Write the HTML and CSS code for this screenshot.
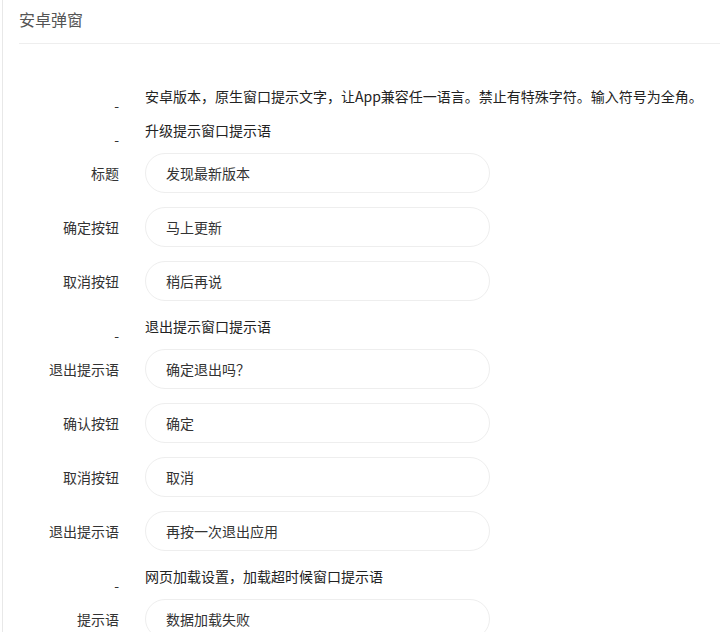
FILE: index.html
```html
<!DOCTYPE html>
<html lang="zh-CN">
<head>
    <meta charset="UTF-8">
    <meta name="viewport" content="width=device-width, initial-scale=1.0">
    <title>安卓弹窗</title>
    <link rel="stylesheet" href="styles.css">
</head>
<body>
    <div class="panel">
        <div class="panel-head">安卓弹窗</div>

        <form class="form">
            <div class="form-row is-text">
                <label class="form-label">-</label>
                <div class="form-text">安卓版本，原生窗口提示文字，让App兼容任一语言。禁止有特殊字符。输入符号为全角。</div>
            </div>

            <!-- 升级提示 -->
            <div class="form-row is-text">
                <label class="form-label">-</label>
                <div class="form-text">升级提示窗口提示语</div>
            </div>
            <div class="form-row">
                <label class="form-label">标题</label>
                <input class="form-input" type="text" value="发现最新版本">
            </div>
            <div class="form-row">
                <label class="form-label">确定按钮</label>
                <input class="form-input" type="text" value="马上更新">
            </div>
            <div class="form-row">
                <label class="form-label">取消按钮</label>
                <input class="form-input" type="text" value="稍后再说">
            </div>

            <!-- 退出提示 -->
            <div class="form-row is-text">
                <label class="form-label">-</label>
                <div class="form-text">退出提示窗口提示语</div>
            </div>
            <div class="form-row">
                <label class="form-label">退出提示语</label>
                <input class="form-input" type="text" value="确定退出吗？">
            </div>
            <div class="form-row">
                <label class="form-label">确认按钮</label>
                <input class="form-input" type="text" value="确定">
            </div>
            <div class="form-row">
                <label class="form-label">取消按钮</label>
                <input class="form-input" type="text" value="取消">
            </div>
            <div class="form-row">
                <label class="form-label">退出提示语</label>
                <input class="form-input" type="text" value="再按一次退出应用">
            </div>

            <!-- 网页加载 -->
            <div class="form-row is-text">
                <label class="form-label">-</label>
                <div class="form-text">网页加载设置，加载超时候窗口提示语</div>
            </div>
            <div class="form-row">
                <label class="form-label">提示语</label>
                <input class="form-input" type="text" value="数据加载失败">
            </div>
        </form>
    </div>
</body>
</html>
```

FILE: styles.css
```css
body {
    margin: 0;
    font-family: "Noto Sans CJK SC", "Liberation Sans", sans-serif;
    font-size: 14px;
    color: #333;
    background-color: #fff;
}
.panel {
    margin-left: 2px;
    border-left: 1px solid #e8e8e8;
    min-height: 700px;
}
.panel-head {
    margin-left: 16px;
    height: 44px;
    box-sizing: border-box;
    border-bottom: 1px solid #eee;
    line-height: 38px;
    font-size: 16px;
    color: #555;
}
.form {
    padding-top: 41px;
}
.form-row {
    display: flex;
    align-items: flex-start;
    margin-bottom: 14px;
}
.form-label {
    width: 116px;
    flex-shrink: 0;
    margin-right: 26px;
    text-align: right;
    line-height: 40px;
    color: #333;
}
.form-row.is-text {
    padding-top: 1px;
    margin-bottom: 13px;
    line-height: 20px;
}
.is-text .form-label {
    line-height: 20px;
    padding-top: 9px;
    margin-bottom: -9px;
}
.form-text {
    color: #222;
    white-space: nowrap;
}
.form-input {
    width: 345px;
    height: 40px;
    box-sizing: border-box;
    margin: 0;
    padding: 0 20px;
    border: 1px solid #eee;
    border-radius: 20px;
    font-family: inherit;
    font-size: 14px;
    color: #333;
    background-color: #fff;
    outline: none;
}
```
